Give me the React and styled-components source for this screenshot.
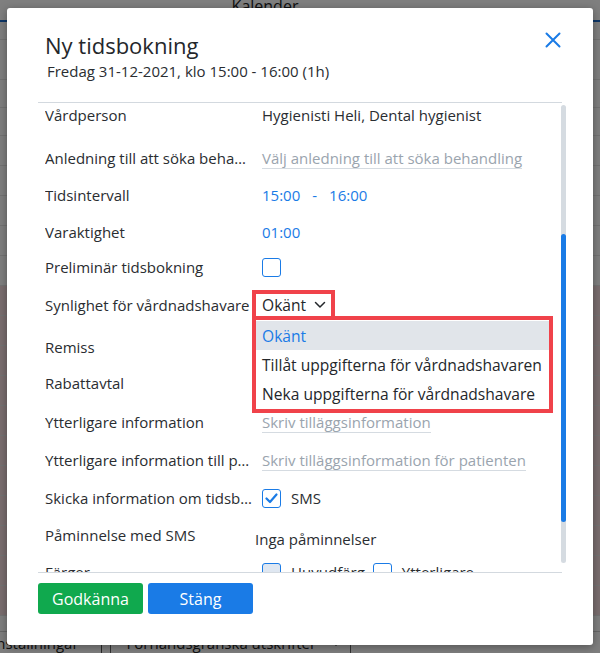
import React from "react";
import styled, { createGlobalStyle } from "styled-components";

const GlobalStyle = createGlobalStyle`
  html, body { margin: 0; padding: 0; }
  body { font-family: "Open Sans", "Noto Sans", sans-serif; }
  * { box-sizing: border-box; }
`;

const Screen = styled.div`
  position: relative;
  width: 600px;
  height: 653px;
  overflow: hidden;
  background: #ffffff;
  display: flex;
  flex-direction: column;
`;

const AppHeader = styled.div`
  height: 22px;
  display: flex;
  justify-content: center;
  align-items: flex-start;
  border-bottom: 2px solid #1d6fd0;
  font-size: 16px;
  color: #222;
  line-height: 12px;
  padding-right: 70px;
`;

const AppGrid = styled.div`
  flex: 1;
  display: flex;
  flex-direction: column;
`;

const GridRow = styled.div`
  height: ${(p) => p.$h}px;
  border-bottom: 1px solid #e6e6e6;
  background: ${(p) => p.$bg || "#ffffff"};
`;

const AppBottom = styled.div`
  height: 22px;
  display: flex;
  align-items: center;
  gap: 22px;
  font-size: 15px;
  color: #222;
  border-top: 1px solid #cfcfcf;
  margin-left: -8px;
`;

const BottomSep = styled.div`
  width: 1px;
  height: 22px;
  background: #555;
`;

const BottomSelect = styled.div`
  display: flex;
  align-items: center;
  gap: 14px;
  border: 1px solid #666;
  margin-left: -14px;
  padding: 0 8px 0 16px;
  height: 24px;
`;

const Overlay = styled.div`
  position: absolute;
  inset: 0;
  background: rgba(0, 0, 0, 0.5);
  display: flex;
  justify-content: center;
  align-items: flex-start;
  padding-top: 8px;
`;

const Modal = styled.div`
  width: 586px;
  height: 637px;
  background: #ffffff;
  border-radius: 3px;
  box-shadow: 0 2px 10px rgba(0, 0, 0, 0.35);
  padding: 0 31px;
  display: flex;
  flex-direction: column;
  color: #2a2d31;
`;

const Header = styled.div`
  display: flex;
  justify-content: space-between;
  align-items: flex-start;
  padding: 24px 1px 21px 7px;
  border-bottom: 1px solid #d3d9df;
`;

const TitleBlock = styled.div`
  display: flex;
  flex-direction: column;
`;

const Title = styled.div`
  font-size: 22px;
  line-height: 26px;
  color: #24272b;
`;

const Subtitle = styled.div`
  font-size: 15px;
  line-height: 20px;
  margin-top: 3px;
  margin-left: 2px;
  color: #2a2d31;
`;

const CloseButton = styled.button`
  border: 0;
  background: none;
  padding: 0;
  margin-top: 0;
  width: 16px;
  height: 16px;
  display: flex;
  cursor: pointer;
  color: #1a7be6;
`;

const BodyWrap = styled.div`
  position: relative;
  flex: 1;
  min-height: 0;
`;

const ScrollArea = styled.div`
  height: 100%;
  overflow: hidden;
  padding-left: 7px;
`;

const ScrollTrack = styled.div`
  position: absolute;
  right: -4px;
  top: 2px;
  width: 5px;
  height: 458px;
  border-radius: 3px;
  background: #d5dbe1;
`;

const ScrollThumb = styled.div`
  position: absolute;
  left: 0;
  right: 0;
  border-radius: 3px;
  background: #1a7be6;
`;

const Row = styled.div`
  display: flex;
  align-items: center;
  height: 24px;
  margin-top: ${(p) => (p.$mt != null ? p.$mt : 13)}px;
  font-size: 15px;
`;

const Label = styled.div`
  width: 210px;
  flex: none;
  white-space: nowrap;
  overflow: hidden;
  text-overflow: ellipsis;
  color: #2a2d31;
`;

const Value = styled.div`
  margin-left: ${(p) => p.$ml ?? 7}px;
  display: flex;
  align-items: center;
  gap: ${(p) => p.$gap ?? 0}px;
  transform: translateY(${(p) => p.$dy ?? 0}px);
  color: ${(p) => (p.$blue ? "#1a7be6" : "#2a2d31")};
  white-space: nowrap;
`;

const Placeholder = styled.span`
  color: #9aa4ae;
  border-bottom: 1px solid #d5dbe1;
  line-height: 20px;
`;

const Box = styled.span`
  width: 19px;
  height: 19px;
  border: 1.5px solid #1a7be6;
  border-radius: 3px;
  background: ${(p) => p.$fill || "#ffffff"};
  display: inline-flex;
  align-items: center;
  justify-content: center;
  flex: none;
`;

const CheckLabel = styled.span`
  margin-left: ${(p) => p.$ml ?? 10}px;
  margin-right: ${(p) => p.$mr ?? 0}px;
`;

const SelectWrap = styled.div`
  position: relative;
  margin-left: -10px;
`;

const SelectBox = styled.div`
  width: 83px;
  height: 30px;
  border: 4px solid #f0424a;
  display: flex;
  align-items: center;
  padding-left: 6px;
  gap: 8px;
  font-size: 15.6px;
  color: #24272b;
  background: #fff;
`;

const Menu = styled.div`
  position: absolute;
  top: 26px;
  left: 0;
  width: 301px;
  height: 97px;
  border: 4px solid #f0424a;
  background: #ffffff;
  padding-top: 1px;
  z-index: 2;
`;

const Option = styled.div`
  height: 29px;
  display: flex;
  align-items: center;
  padding-left: 6px;
  font-size: 15.6px;
  background: ${(p) => (p.$active ? "#e1e5ea" : "transparent")};
  color: ${(p) => (p.$active ? "#1a7be6" : "#24272b")};
  white-space: nowrap;
`;

const Footer = styled.div`
  border-top: 1px solid #d3d9df;
  padding: 10px 0 31px 0;
  display: flex;
  gap: 5px;
`;

const Button = styled.button`
  width: 105px;
  height: 31px;
  border: 0;
  border-radius: 3px;
  background: ${(p) => (p.$variant === "green" ? "#10a94e" : "#1a7be6")};
  color: #ffffff;
  font-family: inherit;
  font-size: 16px;
  cursor: pointer;
`;

const Check = () => (
  <svg width="13" height="11" viewBox="0 0 13 11">
    <path d="M1.5 5.5 L5 9 L11.5 1.5" fill="none" stroke="#1a7be6" strokeWidth="2.2" strokeLinecap="round" strokeLinejoin="round" />
  </svg>
);

const Chevron = () => (
  <svg width="12" height="8" viewBox="0 0 12 8">
    <path d="M1.5 1.5 L6 6 L10.5 1.5" fill="none" stroke="#24272b" strokeWidth="1.5" strokeLinecap="round" strokeLinejoin="round" />
  </svg>
);

const CloseIcon = () => (
  <svg width="16" height="16" viewBox="0 0 16 16">
    <path d="M1.5 1.5 L14.5 14.5 M14.5 1.5 L1.5 14.5" fill="none" stroke="currentColor" strokeWidth="2" strokeLinecap="round" />
  </svg>
);

const pink = "#f5dcde";
const gridRows = [
  { h: 18 }, { h: 40 }, { h: 28 }, { h: 28 }, { h: 30 }, { h: 30 }, { h: 30 },
  { h: 30 }, { h: 30 }, { h: 30, bg: pink }, { h: 30, bg: pink }, { h: 30, bg: pink },
  { h: 30, bg: pink }, { h: 30, bg: pink }, { h: 30, bg: pink }, { h: 30, bg: pink },
  { h: 30, bg: pink }, { h: 30, bg: pink }, { h: 30, bg: pink }, { h: 30, bg: pink },
];

export default function App() {
  return (
    <>
      <GlobalStyle />
      <Screen>
        <AppHeader>Kalender</AppHeader>
        <AppGrid>
          {gridRows.map((r, i) => (
            <GridRow key={i} $h={r.h} $bg={r.bg} />
          ))}
        </AppGrid>
        <AppBottom>
          <span>Inställningar</span>
          <BottomSep />
          <BottomSelect>
            <span>Förhandsgranska utskrifter</span>
            <Chevron />
          </BottomSelect>
        </AppBottom>

        <Overlay>
          <Modal>
            <Header>
              <TitleBlock>
                <Title>Ny tidsbokning</Title>
                <Subtitle>Fredag 31-12-2021, klo 15:00 - 16:00 (1h)</Subtitle>
              </TitleBlock>
              <CloseButton aria-label="Stäng">
                <CloseIcon />
              </CloseButton>
            </Header>

            <BodyWrap>
              <ScrollArea>
                <Row $mt={0}>
                  <Label>Vårdperson</Label>
                  <Value>Hygienisti Heli, Dental hygienist</Value>
                </Row>
                <Row $mt={19}>
                  <Label>Anledning till att söka behandling</Label>
                  <Value>
                    <Placeholder>Välj anledning till att söka behandling</Placeholder>
                  </Value>
                </Row>
                <Row>
                  <Label>Tidsintervall</Label>
                  <Value $blue $gap={12}>
                    <span>15:00</span>
                    <span>-</span>
                    <span>16:00</span>
                  </Value>
                </Row>
                <Row>
                  <Label>Varaktighet</Label>
                  <Value $blue>01:00</Value>
                </Row>
                <Row $mt={11}>
                  <Label>Preliminär tidsbokning</Label>
                  <Value>
                    <Box />
                  </Value>
                </Row>
                <Row $mt={14}>
                  <Label>Synlighet för vårdnadshavare</Label>
                  <Value>
                    <SelectWrap>
                      <SelectBox>
                        <span>Okänt</span>
                        <Chevron />
                      </SelectBox>
                      <Menu>
                        <Option $active>Okänt</Option>
                        <Option>Tillåt uppgifterna för vårdnadshavaren</Option>
                        <Option>Neka uppgifterna för vårdnadshavare</Option>
                      </Menu>
                    </SelectWrap>
                  </Value>
                </Row>
                <Row $mt={18}>
                  <Label>Remiss</Label>
                </Row>
                <Row $mt={12}>
                  <Label>Rabattavtal</Label>
                </Row>
                <Row $mt={15}>
                  <Label>Ytterligare information</Label>
                  <Value>
                    <Placeholder>Skriv tilläggsinformation</Placeholder>
                  </Value>
                </Row>
                <Row $mt={14}>
                  <Label>Ytterligare information till patienten</Label>
                  <Value>
                    <Placeholder>Skriv tilläggsinformation för patienten</Placeholder>
                  </Value>
                </Row>
                <Row $mt={14}>
                  <Label>Skicka information om tidsbokningen</Label>
                  <Value>
                    <Box>
                      <Check />
                    </Box>
                    <CheckLabel>SMS</CheckLabel>
                  </Value>
                </Row>
                <Row>
                  <Label>Påminnelse med SMS</Label>
                  <Value $ml={0} $dy={4}>Inga påminnelser</Value>
                </Row>
                <Row>
                  <Label>Färger</Label>
                  <Value>
                    <Box $fill="#dfe7f1" />
                    <CheckLabel $mr={8}>Huvudfärg</CheckLabel>
                    <Box />
                    <CheckLabel>Ytterligare</CheckLabel>
                  </Value>
                </Row>
              </ScrollArea>
              <ScrollTrack>
                <ScrollThumb style={{ top: 129, height: 288 }} />
              </ScrollTrack>
            </BodyWrap>

            <Footer>
              <Button $variant="green">Godkänna</Button>
              <Button>Stäng</Button>
            </Footer>
          </Modal>
        </Overlay>
      </Screen>
    </>
  );
}
